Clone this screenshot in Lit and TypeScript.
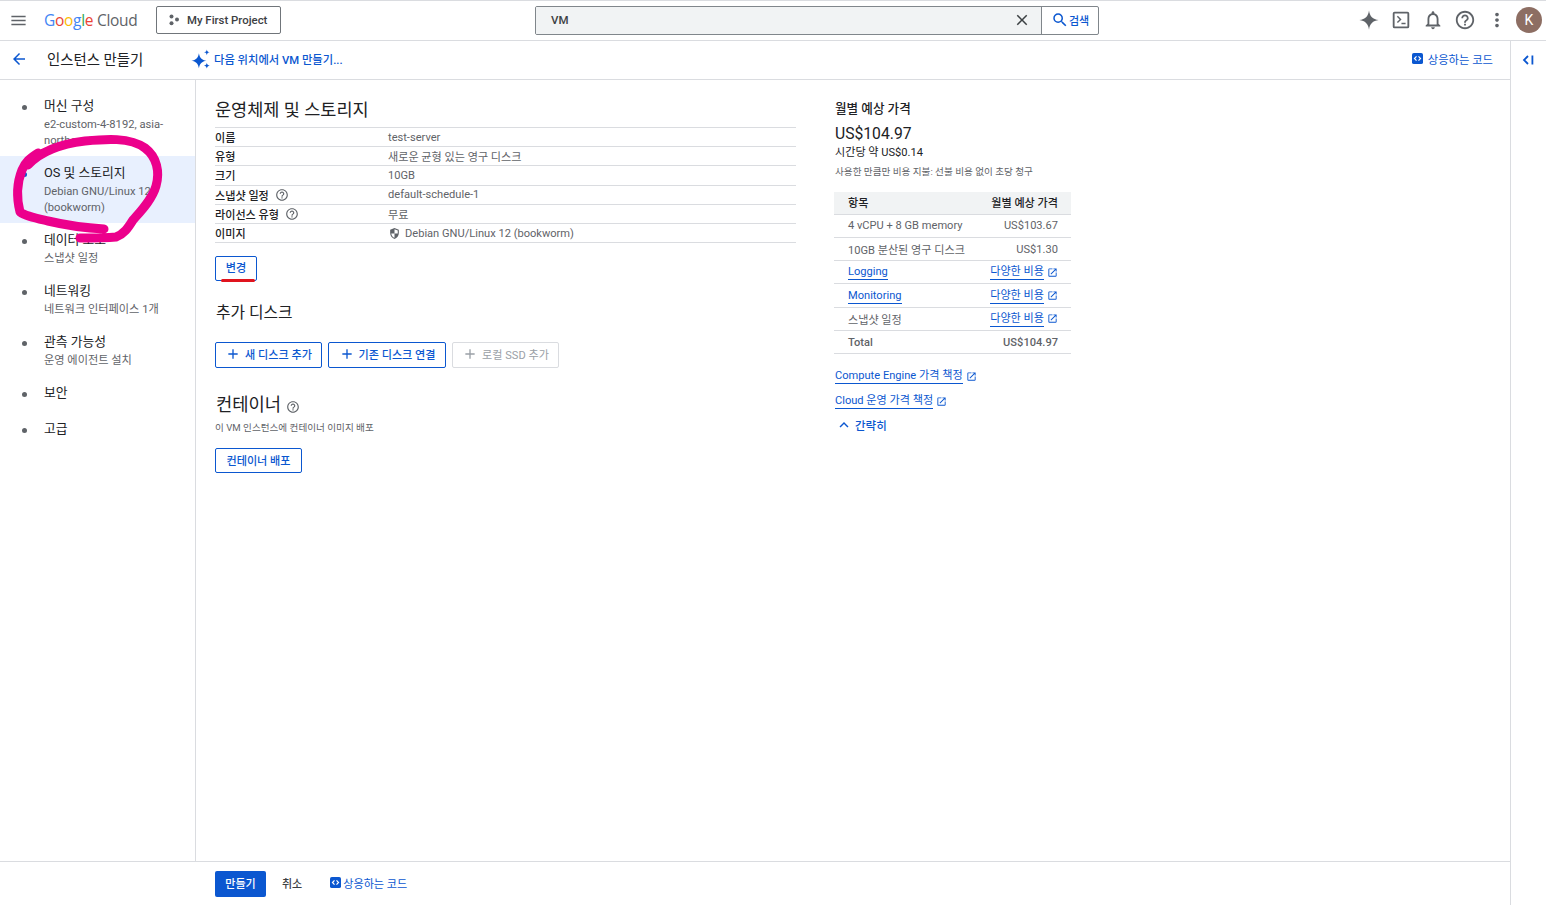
import { LitElement, css, html, svg } from "lit";
import { customElement } from "lit/decorators.js";

const P = {
  menu: "M3 18h18v-2H3v2zm0-5h18v-2H3v2zm0-7v2h18V6H3z",
  back: "M20 11H7.83l5.59-5.59L12 4l-8 8 8 8 1.41-1.41L7.83 13H20v-2z",
  search:
    "M15.5 14h-.79l-.28-.27A6.471 6.471 0 0 0 16 9.5 6.5 6.5 0 1 0 9.5 16c1.61 0 3.09-.59 4.23-1.57l.27.28v.79l5 4.99L20.49 19l-4.99-5zm-6 0C7.01 14 5 11.99 5 9.5S7.01 5 9.5 5 14 7.01 14 9.5 11.99 14 9.5 14z",
  close:
    "M19 6.41 17.59 5 12 10.59 6.41 5 5 6.41 10.59 12 5 17.59 6.41 19 12 13.41 17.59 19 19 17.59 13.41 12z",
  help: "M11 18h2v-2h-2v2zm1-16C6.48 2 2 6.48 2 12s4.48 10 10 10 10-4.48 10-10S17.52 2 12 2zm0 18c-4.41 0-8-3.59-8-8s3.59-8 8-8 8 3.59 8 8-3.59 8-8 8zm0-14c-2.21 0-4 1.79-4 4h2c0-1.1.9-2 2-2s2 .9 2 2c0 2-3 1.75-3 5h2c0-2.25 3-2.5 3-5 0-2.21-1.79-4-4-4z",
  bell: "M12 22c1.1 0 2-.9 2-2h-4c0 1.1.9 2 2 2zm6-6v-5c0-3.07-1.63-5.64-4.5-6.32V4c0-.83-.67-1.5-1.5-1.5s-1.5.67-1.5 1.5v.68C7.64 5.36 6 7.92 6 11v5l-2 2v1h16v-1l-2-2zm-2 1H8v-6c0-2.48 1.51-4.5 4-4.5s4 2.02 4 4.5v6z",
  more: "M12 8c1.1 0 2-.9 2-2s-.9-2-2-2-2 .9-2 2 .9 2 2 2zm0 2c-1.1 0-2 .9-2 2s.9 2 2 2 2-.9 2-2-.9-2-2-2zm0 6c-1.1 0-2 .9-2 2s.9 2 2 2 2-.9 2-2-.9-2-2-2z",
  open: "M19 19H5V5h7V3H5a2 2 0 0 0-2 2v14a2 2 0 0 0 2 2h14c1.1 0 2-.9 2-2v-7h-2v7zM14 3v2h3.59l-9.83 9.83 1.41 1.41L19 6.41V10h2V3h-7z",
  less: "M12 8l-6 6 1.41 1.41L12 10.83l4.59 4.58L18 14z",
  add: "M19 13h-6v6h-2v-6H5v-2h6V5h2v6h6v2z",
  spark:
    "M12 1.5C12.8 7.8 16.2 11.2 22.5 12 16.2 12.8 12.8 16.2 12 22.5 11.2 16.2 7.8 12.8 1.5 12 7.8 11.2 11.2 7.8 12 1.5z",
  terminal:
    "M5 3h14a2 2 0 0 1 2 2v14a2 2 0 0 1-2 2H5a2 2 0 0 1-2-2V5a2 2 0 0 1 2-2zm0 2v14h14V5H5zm2.500 3.500 1.100-1.100 4 4-4 4-1.100-1.100 2.900-2.900zM12.500 15h4.500v1.500h-4.500z",
  shield:
    "M12 2 4 5v6.100c0 5 3.400 9.700 8 10.900 4.600-1.200 8-5.900 8-10.900V5l-8-3zm0 2.200 6 2.250V12h-6v7.900c-3.200-1-5.500-4.300-6-7.900h6V4.200z",
  sparks:
    "M9.500 5c.8 5.300 3.700 8.200 9 9-5.300.8-8.200 3.700-9 9-.8-5.300-3.700-8.200-9-9 5.300-.8 8.200-3.700 9-9zM19 .5c.4 2.300 1.200 3.100 3.500 3.500-2.300.4-3.100 1.200-3.500 3.500-.4-2.300-1.200-3.100-3.500-3.500 2.300-.4 3.100-1.200 3.500-3.500zM19 16.500c.4 2.300 1.200 3.100 3.500 3.500-2.300.4-3.100 1.200-3.500 3.500-.4-2.300-1.200-3.100-3.500-3.500 2.300-.4 3.100-1.200 3.500-3.500z",
};

const icon = (d: string, cls = "i16") =>
  html`<svg class=${cls} viewBox="0 0 24 24" aria-hidden="true">${svg`<path d=${d}></path>`}</svg>`;

const codeBox = html`<svg class="code" viewBox="0 0 12 12" aria-hidden="true">
  <rect width="12" height="12" rx="2" fill="#0b57d0"></rect>
  <path d="M4.900 3.700 2.700 6l2.200 2.300M7.100 3.700 9.300 6 7.100 8.300" fill="none" stroke="#fff" stroke-width="1.300"></path>
</svg>`;

const navItems = [
  { title: "머신 구성", sub: "e2-custom-4-8192, asia-northeast3" },
  { title: "OS 및 스토리지", sub: "Debian GNU/Linux 12 (bookworm)", active: true },
  { title: "데이터 보호", sub: "스냅샷 일정" },
  { title: "네트워킹", sub: "네트워크 인터페이스 1개" },
  { title: "관측 가능성", sub: "운영 에이전트 설치" },
  { title: "보안" },
  { title: "고급" },
];

const specRows = [
  { k: "이름", v: "test-server" },
  { k: "유형", v: "새로운 균형 있는 영구 디스크" },
  { k: "크기", v: "10GB" },
  { k: "스냅샷 일정", v: "default-schedule-1", help: true },
  { k: "라이선스 유형", v: "무료", help: true },
  { k: "이미지", v: "Debian GNU/Linux 12 (bookworm)", shield: true },
];

const priceRows = [
  { k: "4 vCPU + 8 GB memory", v: "US$103.67" },
  { k: "10GB 분산된 영구 디스크", v: "US$1.30" },
  { k: "Logging", v: "다양한 비용", kLink: true, vLink: true },
  { k: "Monitoring", v: "다양한 비용", kLink: true, vLink: true },
  { k: "스냅샷 일정", v: "다양한 비용", vLink: true },
  { k: "Total", v: "US$104.97", total: true },
];

@customElement("app-root")
export class AppRoot extends LitElement {
  static styles = css`
    :host {
      display: flex;
      flex-direction: column;
      position: relative;
      height: 905px;
      overflow: hidden;
      background: #fff;
      color: #1f1f1f;
      font-family: Roboto, "Noto Sans CJK KR", sans-serif;
      font-size: 12px;
    }
    svg {
      display: block;
      flex: none;
      fill: currentColor;
    }
    .i16 {
      width: 16px;
      height: 16px;
    }
    .code {
      width: 11px;
      height: 11px;
    }
    a {
      color: #0b57d0;
      text-decoration: none;
    }

    .topbar {
      flex: none;
      display: flex;
      align-items: center;
      box-sizing: border-box;
      height: 41px;
      padding: 0 0 1px 9px;
      border-top: 1px solid #dadce0;
      border-bottom: 1px solid #dadce0;
    }
    .burger {
      width: 19px;
      height: 19px;
      color: #5f6368;
    }
    .logo {
      width: 112px;
      margin-left: 16px;
      font-family: "Open Sans", sans-serif;
      font-size: 15.5px;
      letter-spacing: -0.3px;
      color: #5f6368;
      white-space: nowrap;
    }
    .logo .b { color: #4285f4; }
    .logo .r { color: #ea4335; }
    .logo .y { color: #fbbc04; }
    .logo .g { color: #34a853; }
    .project {
      display: flex;
      align-items: center;
      gap: 7px;
      height: 28px;
      width: 125px;
      box-sizing: border-box;
      padding-left: 11px;
      border: 1px solid #70757a;
      border-radius: 2px;
      font-size: 11.4px;
      font-weight: 500;
      color: #3c4043;
    }
    .project svg {
      width: 12px;
      height: 12px;
      color: #5f6368;
    }
    .search {
      margin-left: 254px;
      display: flex;
      width: 564px;
      height: 29px;
      box-sizing: border-box;
      border: 1px solid #80868b;
      border-radius: 2px;
      overflow: hidden;
    }
    .search .field {
      flex: 1;
      display: flex;
      align-items: center;
      justify-content: space-between;
      padding: 0 10px 0 15px;
      background: #f1f3f4;
      font-size: 11.5px;
      font-weight: 500;
      color: #3c4043;
    }
    .search .field svg {
      width: 18px;
      height: 18px;
      color: #3c4043;
    }
    .search .go {
      display: flex;
      align-items: center;
      justify-content: center;
      width: 56px;
      border-left: 1px solid #80868b;
      color: #0b57d0;
      font-size: 11px;
      font-weight: 500;
    }
    .search .go svg {
      width: 18px;
      height: 18px;
    }
    .actions {
      margin-left: auto;
      display: flex;
      align-items: center;
      gap: 10px;
      padding-right: 4px;
      color: #5f6368;
    }
    .actions svg {
      width: 22px;
      height: 22px;
    }
    .avatar {
      width: 26px;
      height: 26px;
      margin-left: -2px;
      border-radius: 50%;
      background: #8d6e63;
      color: #fff;
      display: flex;
      align-items: center;
      justify-content: center;
      font-size: 14px;
    }

    .body {
      flex: 1;
      display: flex;
      min-height: 0;
    }
    .page {
      flex: 1;
      min-width: 0;
      display: flex;
      flex-direction: column;
    }
    .rail {
      flex: none;
      width: 35px;
      border-left: 1px solid #dadce0;
      display: flex;
      justify-content: center;
      padding-top: 12px;
      color: #0b57d0;
    }
    .rail svg {
      width: 14px;
      height: 14px;
    }

    .subbar {
      flex: none;
      box-sizing: border-box;
      height: 39px;
      padding: 0 17px 3px 10px;
      border-bottom: 1px solid #dadce0;
      display: flex;
      align-items: center;
    }
    .subbar .back {
      width: 18px;
      height: 18px;
      color: #0b57d0;
    }
    .subbar h1 {
      margin: 0 0 0 19px;
      width: 144px;
      font-size: 14.4px;
      font-weight: 400;
      color: #202124;
    }
    .ask {
      display: flex;
      align-items: center;
      gap: 3px;
      font-size: 11.3px;
      font-weight: 500;
    }
    .ask svg {
      width: 20px;
      height: 20px;
      color: #0b57d0;
    }
    .equiv {
      margin-left: auto;
      display: flex;
      align-items: center;
      gap: 5px;
      font-size: 11.3px;
    }

    .work {
      flex: 1;
      display: flex;
      min-height: 0;
    }
    nav {
      flex: none;
      width: 195px;
      border-right: 1px solid #dadce0;
      padding-top: 9px;
    }
    .item {
      display: flex;
      padding: 7px 23px 7px 22px;
    }
    .item.only {
      padding-bottom: 9px;
    }
    .item.active {
      background: #e8f0fe;
    }
    .dot {
      flex: none;
      width: 5px;
      height: 5px;
      margin-top: 9px;
      margin-right: 17px;
      border-radius: 50%;
      background: #5f6368;
    }
    .active .dot {
      background: #0b57d0;
    }
    .item .t {
      font-size: 12.8px;
      line-height: 20px;
      color: #202124;
    }
    .item .s {
      margin-top: 1px;
      font-size: 11.2px;
      line-height: 16px;
      color: #5f6368;
    }

    .content {
      flex: 1;
      min-width: 0;
      display: flex;
      gap: 38px;
      padding-left: 19px;
    }
    .left {
      flex: none;
      width: 581px;
    }
    h2 {
      margin: 0;
      font-weight: 400;
      color: #202124;
    }
    .left > h2:first-child {
      font-size: 17.5px;
      line-height: 24px;
      padding-top: 18px;
      padding-bottom: 5px;
    }
    .spec {
      border-top: 1px solid #dadce0;
    }
    .spec .row {
      display: flex;
      align-items: center;
      height: 19.2px;
      box-sizing: border-box;
      border-bottom: 1px solid #dadce0;
      font-size: 11.1px;
    }
    .spec .k {
      flex: none;
      width: 173px;
      display: flex;
      align-items: center;
      gap: 6px;
      font-weight: 500;
      color: #202124;
    }
    .spec .k svg {
      width: 14px;
      height: 14px;
      color: #5f6368;
    }
    .spec .v {
      display: flex;
      align-items: center;
      gap: 4px;
      color: #5f6368;
    }
    .spec .v svg {
      width: 13px;
      height: 13px;
    }
    .btn {
      display: inline-flex;
      align-items: center;
      justify-content: center;
      gap: 4px;
      box-sizing: border-box;
      height: 26px;
      padding-bottom: 2px;
      border: 1px solid #0b57d0;
      border-radius: 2px;
      font-size: 11.1px;
      font-weight: 500;
      color: #0b57d0;
      background: #fff;
    }
    .btn svg {
      width: 16px;
      height: 16px;
    }
    .btn.off {
      border-color: #dadce0;
      color: #9aa0a6;
      font-weight: 400;
    }
    .change {
      margin-top: 13px;
      width: 42px;
      height: 25px;
      position: relative;
      padding-bottom: 3px;
    }
    .redline {
      position: absolute;
      left: 5px;
      bottom: -2px;
      width: 34px;
      height: 3px;
      border-radius: 2px;
      background: #e0141e;
    }
    h2.disk {
      font-size: 15.8px;
      line-height: 22px;
      margin-top: 21px;
      padding-left: 1px;
    }
    .btns {
      display: flex;
      gap: 6px;
      margin-top: 18px;
    }
    h2.box {
      display: flex;
      align-items: center;
      gap: 5px;
      margin-top: 24px;
      padding-left: 1px;
      font-size: 17.7px;
      line-height: 26px;
    }
    h2.box svg {
      width: 14px;
      height: 14px;
      margin-top: 4px;
      color: #5f6368;
    }
    .desc {
      margin: 3px 0 0;
      font-size: 9.6px;
      line-height: 14px;
      color: #5f6368;
    }
    .deploy {
      margin-top: 13px;
      width: 87px;
      height: 25px;
    }

    .right {
      flex: none;
      width: 237px;
      padding-top: 20px;
    }
    .right > :not(.prices) {
      padding-left: 1px;
    }
    .right h3 {
      margin: 0;
      font-size: 12.6px;
      line-height: 18px;
      font-weight: 500;
      color: #202124;
    }
    .total {
      margin-top: 6px;
      font-size: 15.7px;
      line-height: 20px;
      color: #202124;
    }
    .hour {
      margin-top: 1px;
      font-size: 11.1px;
      line-height: 16px;
      color: #202124;
    }
    .note {
      margin-top: 4px;
      font-size: 9.6px;
      line-height: 14px;
      color: #5f6368;
    }
    .prices {
      margin-top: 13px;
      font-size: 11.1px;
    }
    .prices .row {
      display: flex;
      align-items: center;
      justify-content: space-between;
      box-sizing: border-box;
      height: 23.3px;
      padding: 0 13px 0 14px;
      border-bottom: 1px solid #dadce0;
      color: #5f6368;
    }
    .prices .head {
      height: 22.6px;
      padding-bottom: 2px;
      background: #f1f3f4;
      font-weight: 500;
      color: #202124;
    }
    .prices .sum {
      font-weight: 500;
    }
    .lnk {
      display: inline-flex;
      align-items: center;
      gap: 3px;
    }
    .lnk span {
      border-bottom: 1px solid #0b57d0;
      line-height: 15px;
    }
    .lnk svg {
      width: 11px;
      height: 11px;
    }
    .links {
      display: flex;
      flex-direction: column;
      align-items: flex-start;
      gap: 9px;
      margin-top: 14px;
    }
    .links .lnk {
      font-size: 11.1px;
    }
    .fold {
      display: flex;
      align-items: center;
      gap: 2px;
      margin-top: 7px;
      font-size: 11.5px;
      font-weight: 500;
      color: #0b57d0;
    }
    .fold svg {
      width: 18px;
      height: 18px;
    }

    .foot {
      flex: none;
      height: 43px;
      border-top: 1px solid #dadce0;
      display: flex;
      align-items: center;
      padding-left: 215px;
      font-size: 11px;
      font-weight: 500;
    }
    .create {
      width: 51px;
      height: 26px;
      box-sizing: border-box;
      padding-bottom: 2px;
      display: flex;
      align-items: center;
      justify-content: center;
      border-radius: 2px;
      background: #0b57d0;
      color: #fff;
    }
    .cancel {
      margin: 0 0 2px 16px;
      color: #3c4043;
    }
    .foot a {
      margin: 0 0 2px 28px;
      display: flex;
      align-items: center;
      gap: 2px;
      font-size: 11.1px;
      font-weight: 400;
    }

    .scribble {
      position: absolute;
      left: 0;
      top: 0;
      width: 200px;
      height: 260px;
      fill: none;
      pointer-events: none;
    }
  `;

  render() {
    return html`
      <header class="topbar">
        ${icon(P.menu, "burger")}
        <div class="logo">
          <span class="b">G</span><span class="r">o</span><span class="y">o</span><span class="b">g</span><span class="g">l</span><span class="r">e</span>
          Cloud
        </div>
        <div class="project">
          <svg viewBox="0 0 12 12"><circle cx="3.5" cy="2.5" r="2"></circle><circle cx="9" cy="5.5" r="2"></circle><circle cx="3.5" cy="9.3" r="2"></circle></svg>
          My First Project
        </div>
        <div class="search">
          <div class="field">VM ${icon(P.close)}</div>
          <div class="go">${icon(P.search)}검색</div>
        </div>
        <div class="actions">
          ${icon(P.spark)} ${icon(P.terminal)} ${icon(P.bell)} ${icon(P.help)} ${icon(P.more)}
          <div class="avatar">K</div>
        </div>
      </header>
      <div class="body">
        <div class="page">
          <div class="subbar">
            ${icon(P.back, "back")}
            <h1>인스턴스 만들기</h1>
            <a class="ask">${icon(P.sparks)}다음 위치에서 VM 만들기...</a>
            <a class="equiv">${codeBox}상응하는 코드</a>
          </div>
          <div class="work">
            <nav>
              ${navItems.map(
                (n) => html`<div class="item ${n.active ? "active" : ""} ${n.sub ? "" : "only"}">
                  <div class="dot"></div>
                  <div>
                    <div class="t">${n.title}</div>
                    ${n.sub ? html`<div class="s">${n.sub}</div>` : ""}
                  </div>
                </div>`,
              )}
            </nav>
            <div class="content">
              <section class="left">
                <h2>운영체제 및 스토리지</h2>
                <div class="spec">
                  ${specRows.map(
                    (r) => html`<div class="row">
                      <div class="k">${r.k}${r.help ? icon(P.help) : ""}</div>
                      <div class="v">${r.shield ? icon(P.shield) : ""}${r.v}</div>
                    </div>`,
                  )}
                </div>
                <div class="btn change">변경<div class="redline"></div></div>
                <h2 class="disk">추가 디스크</h2>
                <div class="btns">
                  <div class="btn" style="width:107px">${icon(P.add)}새 디스크 추가</div>
                  <div class="btn" style="width:118px">${icon(P.add)}기존 디스크 연결</div>
                  <div class="btn off" style="width:107px">${icon(P.add)}로컬 SSD 추가</div>
                </div>
                <h2 class="box">컨테이너 ${icon(P.help)}</h2>
                <p class="desc">이 VM 인스턴스에 컨테이너 이미지 배포</p>
                <div class="btn deploy">컨테이너 배포</div>
              </section>
              <aside class="right">
                <h3>월별 예상 가격</h3>
                <div class="total">US$104.97</div>
                <div class="hour">시간당 약 US$0.14</div>
                <div class="note">사용한 만큼만 비용 지불: 선불 비용 없이 초당 청구</div>
                <div class="prices">
                  <div class="row head"><span>항목</span><span>월별 예상 가격</span></div>
                  ${priceRows.map(
                    (r) => html`<div class="row ${r.total ? "sum" : ""}">
                      ${r.kLink ? html`<a class="lnk"><span>${r.k}</span></a>` : html`<span>${r.k}</span>`}
                      ${r.vLink
                        ? html`<a class="lnk"><span>${r.v}</span>${icon(P.open)}</a>`
                        : html`<span>${r.v}</span>`}
                    </div>`,
                  )}
                </div>
                <div class="links">
                  <a class="lnk"><span>Compute Engine 가격 책정</span>${icon(P.open)}</a>
                  <a class="lnk"><span>Cloud 운영 가격 책정</span>${icon(P.open)}</a>
                </div>
                <div class="fold">${icon(P.less)}간략히</div>
              </aside>
            </div>
          </div>
          <div class="foot">
            <div class="create">만들기</div>
            <div class="cancel">취소</div>
            <a>${codeBox}상응하는 코드</a>
          </div>
        </div>
        <div class="rail">
          <svg viewBox="0 0 14 14"><path d="M6 3 2 7l4 4" fill="none" stroke="currentColor" stroke-width="1.8"></path><rect x="9.5" y="2.5" width="1.8" height="9"></rect></svg>
        </div>
      </div>
      <svg class="scribble" viewBox="0 0 200 260" aria-hidden="true">
        <path
          d="M28 165C40 152 60 144 85 141 105 139 130 137 145 148 157 157 160 172 156 186 152 200 140 212 133 220 128 228 124 234 116 237 105 238 92 238 80 238M104 229C85 228 65 225 48 221 35 218 25 216 20 212 17 200 16 185 22 170 25 162 30 158 38 153"
          stroke="#ec008c"
          stroke-width="9"
          stroke-linecap="round"
          stroke-linejoin="round"
        ></path>
      </svg>
    `;
  }
}
